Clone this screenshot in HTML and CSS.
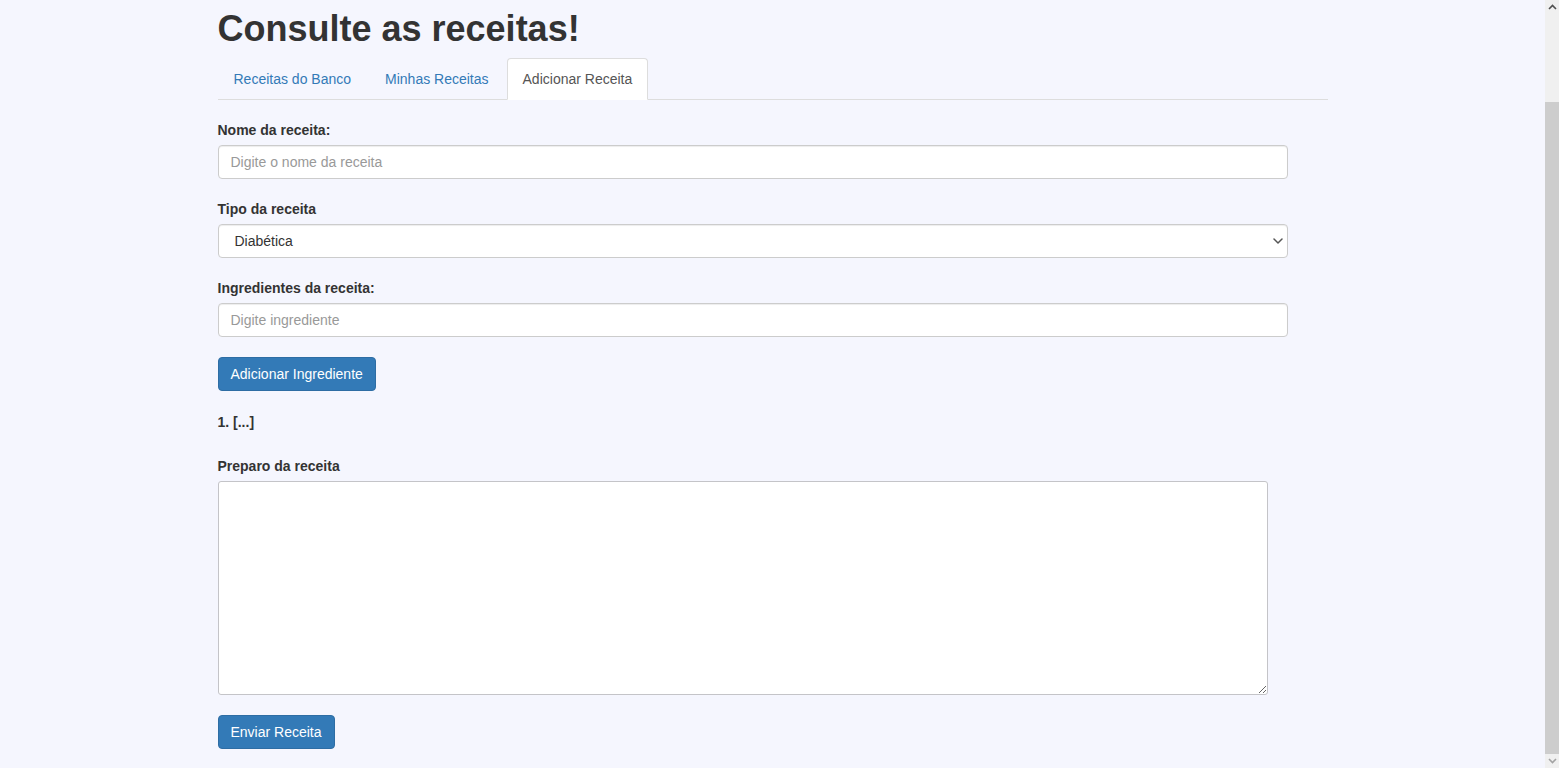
FILE: index.html
```html
<!DOCTYPE html>
<html lang="pt-BR">
<head>
<meta charset="utf-8">
<title>Consulte as receitas!</title>
<link rel="stylesheet" href="styles.css">
</head>
<body>
<div class="page">
  <main class="main">
    <div class="container">
      <h1 class="title">Consulte as receitas!</h1>
      <ul class="tabs">
        <li class="tab"><a href="#">Receitas do Banco</a></li>
        <li class="tab"><a href="#">Minhas Receitas</a></li>
        <li class="tab active"><a href="#">Adicionar Receita</a></li>
      </ul>
      <form class="form">
        <div class="group">
          <label class="label" for="nome">Nome da receita:</label>
          <input class="control wide" id="nome" type="text" placeholder="Digite o nome da receita">
        </div>
        <div class="group">
          <label class="label" for="tipo">Tipo da receita</label>
          <div class="select-wrap">
            <select class="control wide select" id="tipo">
              <option>Diabética</option>
              <option>Vegana</option>
              <option>Vegetariana</option>
            </select>
            <svg class="chevron" width="10" height="6" viewBox="0 0 10 6"><path d="M1 1 L5 5 L9 1" fill="none" stroke="#555" stroke-width="1.5" stroke-linecap="round" stroke-linejoin="round"/></svg>
          </div>
        </div>
        <div class="group">
          <label class="label" for="ingr">Ingredientes da receita:</label>
          <input class="control wide" id="ingr" type="text" placeholder="Digite ingrediente">
        </div>
        <div class="group group-btn">
          <button type="button" class="btn">Adicionar Ingrediente</button>
        </div>
        <div class="ingredient">1. [...]</div>
        <div class="group">
          <label class="label" for="preparo">Preparo da receita</label>
          <textarea class="textarea" id="preparo"></textarea>
        </div>
        <div class="group">
          <button type="button" class="btn">Enviar Receita</button>
        </div>
      </form>
    </div>
  </main>
  <aside class="scrollbar">
    <div class="sb-btn">
      <svg width="9" height="6" viewBox="0 0 9 6"><path d="M1 5 L4.5 1.5 L8 5" fill="none" stroke="#505050" stroke-width="1.6"/></svg>
    </div>
    <div class="sb-track">
      <div class="sb-thumb"></div>
    </div>
    <div class="sb-btn">
      <svg width="9" height="6" viewBox="0 0 9 6"><path d="M1 1 L4.5 4.5 L8 1" fill="none" stroke="#a3a3a3" stroke-width="1.6"/></svg>
    </div>
  </aside>
</div>
</body>
</html>
```
FILE: styles.css
```css
* {
  box-sizing: border-box;
}

html, body {
  margin: 0;
  padding: 0;
  height: 100%;
  overflow: hidden;
}

body {
  background: #f5f6fe;
  color: #333;
  font-family: "Liberation Sans", Arial, Helvetica, sans-serif;
  font-size: 14px;
  line-height: 20px;
}

.page {
  display: flex;
  height: 768px;
}

.main {
  flex: 1;
  min-width: 0;
}

.container {
  width: 1140px;
  margin: 0 auto;
  padding: 0 15px;
}

.title {
  margin: 9px 0 9px;
  font-size: 36px;
  line-height: 40px;
  font-weight: 700;
  color: #333;
}

.tabs {
  display: flex;
  list-style: none;
  margin: 0;
  padding: 0;
  border-bottom: 1px solid #ddd;
}

.tab {
  margin-bottom: -1px;
  margin-right: 2px;
}

.tab a {
  display: block;
  padding: 10px 15px;
  line-height: 20px;
  border: 1px solid transparent;
  border-radius: 4px 4px 0 0;
  color: #337ab7;
  text-decoration: none;
}

.tab.active a {
  background: #fff;
  color: #555;
  border-color: #ddd #ddd transparent;
}

.form {
  padding-top: 20px;
}

.group {
  margin-bottom: 20px;
}

.group-btn {
  margin-bottom: 21px;
}

.label {
  display: block;
  font-weight: 700;
  margin-bottom: 5px;
  line-height: 20px;
}

.control {
  display: block;
  height: 34px;
  padding: 6px 12px;
  font-family: inherit;
  font-size: 14px;
  line-height: 20px;
  color: #555;
  background: #fff;
  border: 1px solid #ccc;
  border-radius: 4px;
  box-shadow: inset 0 1px 1px rgba(0, 0, 0, 0.075);
  outline: none;
}

.control::placeholder {
  color: #999;
}

.wide {
  width: 1070px;
}

.select-wrap {
  position: relative;
  width: 1070px;
}

.select {
  appearance: none;
  -webkit-appearance: none;
  padding-left: 16px;
  color: #333;
}

.chevron {
  position: absolute;
  right: 5px;
  top: 14px;
}

.btn {
  display: inline-block;
  padding: 6px 12px;
  font-family: inherit;
  font-size: 14px;
  line-height: 20px;
  color: #fff;
  background: #337ab7;
  border: 1px solid #2e6da4;
  border-radius: 4px;
  cursor: pointer;
}

.ingredient {
  font-weight: 700;
  line-height: 20px;
  margin-bottom: 24px;
}

.textarea {
  display: block;
  width: 1050px;
  height: 214px;
  margin: 0;
  padding: 4px;
  background: #fff;
  border: 1px solid #c4c4c8;
  border-radius: 3px;
  font-family: inherit;
  font-size: 14px;
  resize: both;
  outline: none;
}

.scrollbar {
  width: 14px;
  flex: none;
  display: flex;
  flex-direction: column;
  background: #f0f0f0;
}

.sb-btn {
  height: 14px;
  flex: none;
  display: flex;
  align-items: center;
  justify-content: center;
}

.sb-track {
  flex: 1;
  padding-top: 88px;
}

.sb-thumb {
  height: 652px;
  background: #cdcdcd;
}
```
